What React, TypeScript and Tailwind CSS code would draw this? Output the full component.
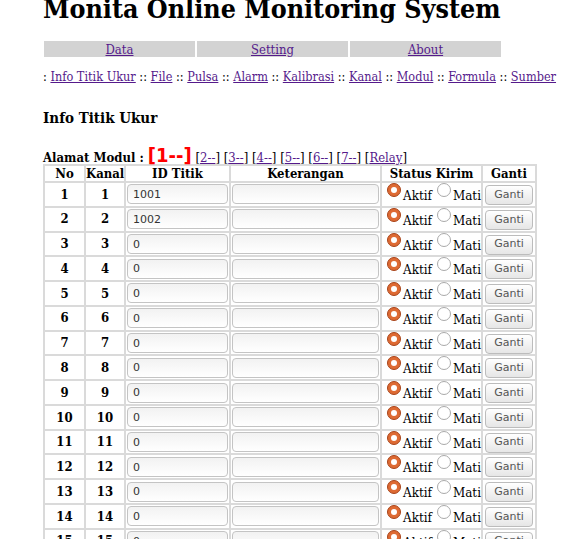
import React from "react";

const serif = "font-['DejaVu_Serif_Condensed','DejaVu_Serif',serif]";
const sans = "font-['DejaVu_Sans','Liberation_Sans',sans-serif]";

const menu = ["Info Titik Ukur", "File", "Pulsa", "Alarm", "Kalibrasi", "Kanal", "Modul", "Formula", "Sumber"];
const modules = ["2--", "3--", "4--", "5--", "6--", "7--", "Relay"];

const rows = Array.from({ length: 16 }, (_, i) => ({
  no: i + 1,
  id: i === 0 ? "1001" : i === 1 ? "1002" : "0",
}));

function Radio({ checked }: { checked: boolean }) {
  return checked ? (
    <span className="shrink-0 flex items-center justify-center w-[14px] h-[14px] rounded-full border border-[#a8441a] bg-[#de6a33]">
      <span className="w-[6px] h-[6px] rounded-full bg-white" />
    </span>
  ) : (
    <span className="shrink-0 block w-[14px] h-[14px] rounded-full border border-[#a9a9a9] bg-white" />
  );
}

function Field({ value, w }: { value: string; w: string }) {
  return (
    <div
      className={`${w} h-[20px] rounded-[4px] border border-[#c4c4c4] bg-gradient-to-b from-[#f2f2f2] to-white pl-[5px] pt-[2px] flex items-center text-[11px] text-[#333] ${sans}`}
    >
      {value}
    </div>
  );
}

export default function App() {
  return (
    <div className={`${serif} text-black bg-white min-h-[539px] pl-[43px] overflow-hidden`}>
      <h1 className="text-[26.6px] font-bold leading-[30px] mt-[-6px] whitespace-nowrap">Monita Online Monitoring System</h1>

      <div className="mt-[17px] w-[457px] flex gap-[2px] ml-[1px] text-[13px]">
        {["Data", "Setting", "About"].map((t) => (
          <div key={t} className="flex-1 h-[16px] bg-[#d3d3d3] flex items-center justify-center">
            <a className="underline text-[#551a8b] leading-none">{t}</a>
          </div>
        ))}
      </div>

      <div className="mt-[12px] text-[12.6px] leading-[16px] whitespace-nowrap">
        :{" "}
        {menu.map((m, i) => (
          <React.Fragment key={m}>
            <a className="underline text-[#551a8b]">{m}</a>
            {i < menu.length - 1 ? " :: " : ""}
          </React.Fragment>
        ))}
      </div>

      <h2 className="mt-[24px] text-[15px] font-bold leading-[18px]">Info Titik Ukur</h2>

      <div className="mt-[20px] text-[13px] leading-[16px] h-[17px] whitespace-nowrap">
        <b>Alamat Modul : </b>
        <span className={`text-[#ff0000] font-bold text-[20px] font-['DejaVu_Sans_Condensed','DejaVu_Sans',sans-serif]`}>[1--]</span>{" "}
        {modules.map((m) => (
          <React.Fragment key={m}>
            [<a className="underline text-[#551a8b]">{m}</a>]{" "}
          </React.Fragment>
        ))}
      </div>

      <table className="table-fixed w-[492px] border-collapse border-2 border-[#dadada] text-[13px]">
        <colgroup>
          <col className="w-[41px]" />
          <col className="w-[40px]" />
          <col className="w-[105px]" />
          <col className="w-[151px]" />
          <col className="w-[101px]" />
          <col className="w-[54px]" />
        </colgroup>
        <thead>
          <tr className="h-[17px] leading-[15px]">
            <th className="border-2 border-[#dadada] p-0">No</th>
            <th className="border-2 border-[#dadada] p-0">Kanal</th>
            <th className="border-2 border-[#dadada] p-0">ID Titik</th>
            <th className="border-2 border-[#dadada] p-0">Keterangan</th>
            <th className="border-2 border-[#dadada] p-0">Status Kirim</th>
            <th className="border-2 border-[#dadada] p-0">Ganti</th>
          </tr>
        </thead>
        <tbody>
          {rows.map((r) => (
            <tr key={r.no}>
              <td className="border-2 border-[#dadada] text-center font-bold p-0">{r.no}</td>
              <td className="border-2 border-[#dadada] text-center font-bold p-0">{r.no}</td>
              <td className="border-2 border-[#dadada] px-[1px] py-0">
                <Field value={r.id} w="w-[101px]" />
              </td>
              <td className="border-2 border-[#dadada] px-[1px] py-0">
                <Field value="" w="w-[147px]" />
              </td>
              <td className="border-2 border-[#dadada] pl-[5px] p-0 text-[13.3px] leading-[16px]">
                <div className="flex items-start h-[22.77px] whitespace-nowrap">
                  <Radio checked />
                  <span className="ml-[2px] mt-[5px]">Aktif</span>
                  <span className="ml-[5px]">
                    <Radio checked={false} />
                  </span>
                  <span className="ml-[2px] mt-[5px]">Mati</span>
                </div>
              </td>
              <td className="border-2 border-[#dadada] px-[2px] py-0">
                <button
                  className={`w-[48px] h-[20px] rounded-[4px] border border-[#bcbcbc] bg-gradient-to-b from-white to-[#e6e6e6] text-[11px] text-[#555] ${sans}`}
                >
                  Ganti
                </button>
              </td>
            </tr>
          ))}
        </tbody>
      </table>
    </div>
  );
}
